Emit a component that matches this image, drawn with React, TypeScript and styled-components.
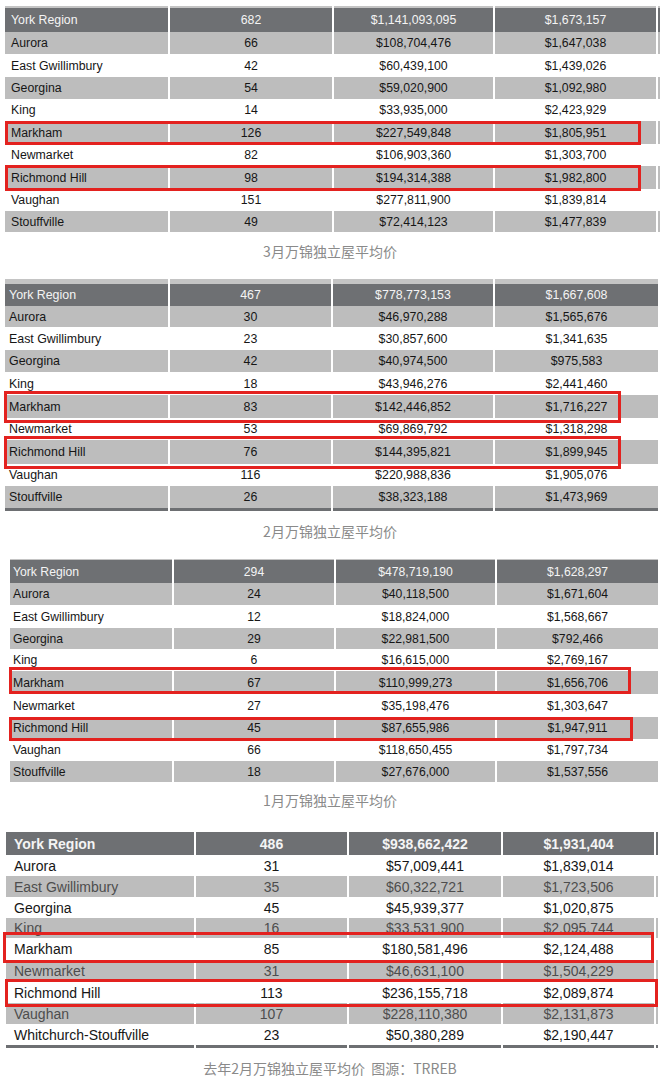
import React from "react";
import styled, { createGlobalStyle } from "styled-components";

const GlobalStyle = createGlobalStyle`
  html, body { margin: 0; padding: 0; background: #ffffff; }
  body { font-family: "Liberation Sans", Arial, sans-serif; }
`;

type Box = { top: number; height: number; left: number; width: number };
type RowData = [string, string, string, string, number, Box?];

type TableSpec = {
  gapBefore: number;
  left: number;
  cols: number[];
  sliver: number;
  topStrip: number;
  headerH: number;
  header: [string, string, string, string];
  rows: RowData[];
  grayFirst: boolean;
  bottomStrip: number;
  font: number;
  headerBold: boolean;
  fadedGray: boolean;
  padLeft: number;
  caption: string;
  captionGap: number;
};

const Page = styled.div`
  width: 672px;
  display: flex;
  flex-direction: column;
`;

const Figure = styled.section<{ $gap: number }>`
  display: flex;
  flex-direction: column;
  margin-top: ${(p) => p.$gap}px;
`;

const Table = styled.div<{ $left: number; $font: number }>`
  display: flex;
  flex-direction: column;
  margin-left: ${(p) => p.$left}px;
  font-size: ${(p) => p.$font}px;
  color: #161616;
`;

const Strip = styled.div<{ $cols: string; $h: number; $tone: "light" | "dark" }>`
  display: grid;
  grid-template-columns: ${(p) => p.$cols};
  height: ${(p) => p.$h}px;
  & > span {
    background: ${(p) => (p.$tone === "light" ? "#c4c4c4" : "#6d6f72")};
    border-left: 2px solid #ffffff;
  }
  & > span:first-child { border-left: none; }
`;

const Row = styled.div<{ $cols: string; $h: number; $tone: "head" | "gray" | "white"; $faded?: boolean; $bold?: boolean }>`
  position: relative;
  display: grid;
  grid-template-columns: ${(p) => p.$cols};
  height: ${(p) => p.$h}px;
  font-weight: ${(p) => (p.$bold ? 700 : 400)};
  color: ${(p) => (p.$tone === "head" ? "#f4f4f4" : p.$tone === "gray" && p.$faded ? "#4d4d4d" : "#161616")};
`;

const Cell = styled.div<{ $tone: "head" | "gray" | "white"; $align: "left" | "center"; $pad: number }>`
  display: flex;
  align-items: center;
  justify-content: ${(p) => (p.$align === "left" ? "flex-start" : "center")};
  padding-left: ${(p) => (p.$align === "left" ? p.$pad : 0)}px;
  background: ${(p) => (p.$tone === "head" ? "#6e7073" : p.$tone === "gray" ? "#bdbdbd" : "#ffffff")};
  border-left: 2px solid #ffffff;
  white-space: nowrap;
  overflow: hidden;
  &:first-child { border-left: none; }
`;

const Highlight = styled.span`
  position: absolute;
  box-sizing: border-box;
  border: 3px solid #e3221f;
  z-index: 2;
  pointer-events: none;
`;

const Caption = styled.div<{ $gap: number }>`
  margin-top: ${(p) => p.$gap}px;
  width: 660px;
  text-align: center;
  font-family: "Noto Sans CJK SC", "Noto Sans", sans-serif;
  font-size: 14px;
  line-height: 20px;
  color: #8a8a8a;
  white-space: pre;
`;

const specs: TableSpec[] = [
  {
    gapBefore: 6,
    left: 5,
    cols: [163, 164, 161, 163],
    sliver: 4,
    topStrip: 2,
    headerH: 24,
    header: ["York Region", "682", "$1,141,093,095", "$1,673,157"],
    grayFirst: true,
    rows: [
      ["Aurora", "66", "$108,704,476", "$1,647,038", 22],
      ["East Gwillimbury", "42", "$60,439,100", "$1,439,026", 23],
      ["Georgina", "54", "$59,020,900", "$1,092,980", 22],
      ["King", "14", "$33,935,000", "$2,423,929", 22],
      ["Markham", "126", "$227,549,848", "$1,805,951", 23, { top: 0, height: 24, left: 0, width: 636 }],
      ["Newmarket", "82", "$106,903,360", "$1,303,700", 22],
      ["Richmond Hill", "98", "$194,314,388", "$1,982,800", 23, { top: -1, height: 26, left: 0, width: 636 }],
      ["Vaughan", "151", "$277,811,900", "$1,839,814", 22],
      ["Stouffville", "49", "$72,414,123", "$1,477,839", 21],
    ],
    bottomStrip: 0,
    font: 12.3,
    headerBold: false,
    fadedGray: false,
    padLeft: 6,
    caption: "3月万锦独立屋平均价",
    captionGap: 9,
  },
  {
    gapBefore: 18,
    left: 5,
    cols: [163, 163, 162, 165],
    sliver: 0,
    topStrip: 5,
    headerH: 22,
    header: ["York Region", "467", "$778,773,153", "$1,667,608"],
    grayFirst: true,
    rows: [
      ["Aurora", "30", "$46,970,288", "$1,565,676", 21],
      ["East Gwillimbury", "23", "$30,857,600", "$1,341,635", 23],
      ["Georgina", "42", "$40,974,500", "$975,583", 22],
      ["King", "18", "$43,946,276", "$2,441,460", 23],
      ["Markham", "83", "$142,446,852", "$1,716,227", 23, { top: -4, height: 32, left: -1, width: 617 }],
      ["Newmarket", "53", "$69,869,792", "$1,318,298", 22],
      ["Richmond Hill", "76", "$144,395,821", "$1,899,945", 24, { top: -4, height: 33, left: -1, width: 617 }],
      ["Vaughan", "116", "$220,988,836", "$1,905,076", 22],
      ["Stouffville", "26", "$38,323,188", "$1,473,969", 22],
    ],
    bottomStrip: 3,
    font: 12.4,
    headerBold: false,
    fadedGray: false,
    padLeft: 4,
    caption: "2月万锦独立屋平均价",
    captionGap: 10,
  },
  {
    gapBefore: 18,
    left: 10,
    cols: [162, 162, 161, 163],
    sliver: 0,
    topStrip: 1,
    headerH: 23,
    header: ["York Region", "294", "$478,719,190", "$1,628,297"],
    grayFirst: true,
    rows: [
      ["Aurora", "24", "$40,118,500", "$1,671,604", 22],
      ["East Gwillimbury", "12", "$18,824,000", "$1,568,667", 23],
      ["Georgina", "29", "$22,981,500", "$792,466", 21],
      ["King", "6", "$16,615,000", "$2,769,167", 22],
      ["Markham", "67", "$110,999,273", "$1,656,706", 23, { top: -4, height: 27, left: -1, width: 622 }],
      ["Newmarket", "27", "$35,198,476", "$1,303,647", 23],
      ["Richmond Hill", "45", "$87,655,986", "$1,947,911", 22, { top: 0, height: 24, left: -1, width: 624 }],
      ["Vaughan", "66", "$118,650,455", "$1,797,734", 22],
      ["Stouffville", "18", "$27,676,000", "$1,537,556", 21],
    ],
    bottomStrip: 0,
    font: 12.2,
    headerBold: false,
    fadedGray: false,
    padLeft: 3,
    caption: "1月万锦独立屋平均价",
    captionGap: 8,
  },
  {
    gapBefore: 22,
    left: 6,
    cols: [188, 153, 154, 153],
    sliver: 4,
    topStrip: 0,
    headerH: 23,
    header: ["York Region", "486", "$938,662,422", "$1,931,404"],
    grayFirst: false,
    rows: [
      ["Aurora", "31", "$57,009,441", "$1,839,014", 21],
      ["East Gwillimbury", "35", "$60,322,721", "$1,723,506", 21],
      ["Georgina", "45", "$45,939,377", "$1,020,875", 21],
      ["King", "16", "$33,531,900", "$2,095,744", 20],
      ["Markham", "85", "$180,581,496", "$2,124,488", 22, { top: -6, height: 31, left: -3, width: 651 }],
      ["Newmarket", "31", "$46,631,100", "$1,504,229", 22],
      ["Richmond Hill", "113", "$236,155,718", "$2,089,874", 21, { top: -3, height: 28, left: -1, width: 653 }],
      ["Vaughan", "107", "$228,110,380", "$2,131,873", 21],
      ["Whitchurch-Stouffville", "23", "$50,380,289", "$2,190,447", 21],
    ],
    bottomStrip: 3,
    font: 14,
    headerBold: true,
    fadedGray: true,
    padLeft: 8,
    caption: "去年2月万锦独立屋平均价  图源：TRREB",
    captionGap: 10,
  },
];

function DataTable({ spec }: { spec: TableSpec }) {
  const widths = spec.sliver ? [...spec.cols, spec.sliver] : spec.cols;
  const template = widths.map((w) => `${w}px`).join(" ");
  const cellsFor = (vals: string[], tone: "head" | "gray" | "white") => {
    const list = spec.sliver ? [...vals, ""] : vals;
    return list.map((v, i) => (
      <Cell key={i} $tone={tone} $align={i === 0 ? "left" : "center"} $pad={spec.padLeft}>
        {v}
      </Cell>
    ));
  };
  return (
    <Table $left={spec.left} $font={spec.font}>
      {spec.topStrip > 0 && (
        <Strip $cols={template} $h={spec.topStrip} $tone="light">
          {widths.map((_, i) => (
            <span key={i} />
          ))}
        </Strip>
      )}
      <Row $cols={template} $h={spec.headerH} $tone="head" $bold={spec.headerBold}>
        {cellsFor(spec.header, "head")}
      </Row>
      {spec.rows.map((r, idx) => {
        const gray = spec.grayFirst ? idx % 2 === 0 : idx % 2 === 1;
        const tone = gray ? "gray" : "white";
        const box = r[5];
        return (
          <Row key={r[0]} $cols={template} $h={r[4]} $tone={tone} $faded={spec.fadedGray}>
            {cellsFor([r[0], r[1], r[2], r[3]], tone)}
            {box && (
              <Highlight
                style={{ top: box.top, left: box.left, width: box.width, height: box.height }}
              />
            )}
          </Row>
        );
      })}
      {spec.bottomStrip > 0 && (
        <Strip $cols={template} $h={spec.bottomStrip} $tone="dark">
          {widths.map((_, i) => (
            <span key={i} />
          ))}
        </Strip>
      )}
    </Table>
  );
}

export default function App() {
  return (
    <>
      <GlobalStyle />
      <Page>
        {specs.map((s, i) => (
          <Figure key={i} $gap={s.gapBefore}>
            <DataTable spec={s} />
            <Caption $gap={s.captionGap}>{s.caption}</Caption>
          </Figure>
        ))}
      </Page>
    </>
  );
}
